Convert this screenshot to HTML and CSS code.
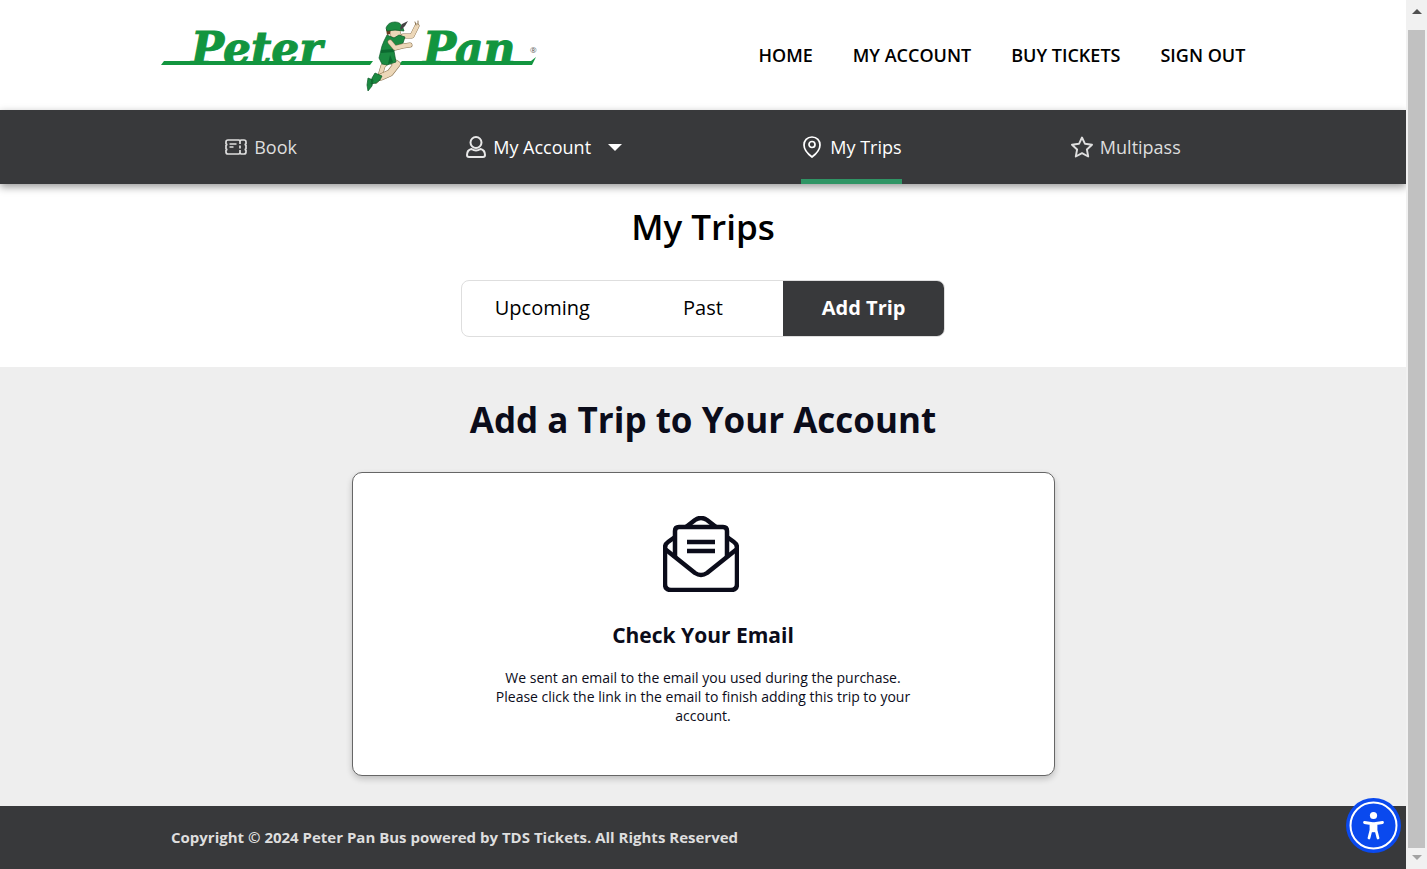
FILE: index.html
```html
<!DOCTYPE html>
<html lang="en">
<head>
    <meta charset="UTF-8">
    <meta name="viewport" content="width=device-width, initial-scale=1.0">
    <title>My Trips - Peter Pan Bus</title>
    <link rel="stylesheet" href="styles.css">
</head>
<body>

    <div class="page">
        <!-- Header -->
        <header class="header">
            <div class="header-inner">
                <a href="#" class="logo" aria-label="Peter Pan">
                    <svg width="376" height="72" viewBox="0 0 376 72">
                        <text class="logo-text" x="30" y="45">Peter</text>
                        <text class="logo-text" x="262" y="45">Pan</text>
                        <path fill="#12953f" d="M3 42h209l-3 4H0zM241 42h129l5-4-4 8H237z"/>
                        <text class="logo-mark" x="369" y="34">®</text>
                        <!-- Running figure -->
                        <g fill="none" stroke-linecap="round" stroke-linejoin="round">
                            <path stroke="#8a7350" stroke-width="5" d="M242 17l9 0 5-10M229 40l-7 7-3 10-4 5"/>
                            <path stroke="#ecd7b8" stroke-width="4" d="M242 17l9 0 5-10M229 40l-7 7-3 10-4 5"/>
                            <path stroke="#8a7350" stroke-width="7" d="M227 40l9 5-7 9-9 4"/>
                            <path stroke="#ecd7b8" stroke-width="6" d="M227 40l9 5-7 9-9 4"/>
                            <path stroke="#8a7350" stroke-width="1" d="M255 6l-1-3M257 5v-3"/>
                        </g>
                        <path fill="#ecd7b8" stroke="#8a7350" stroke-width=".6" d="M228 11h11l1 5-3 4-7-2z"/>
                        <path fill="#6b3d22" d="M225 10h5l-1 5-3 1z"/>
                        <path fill="#1b8a41" stroke="#0c5a28" stroke-width=".7" d="M225 9q2-6 9-6 6 0 8 6l1 3-9-1-8 1z"/>
                        <path fill="#1b8a41" stroke="#0c5a28" stroke-width=".7" d="M226 16l7 3 5-3 6 2-2 6-6 3-3 5 2 11-9 3-5-1-3-6 3-12 2-5z"/>
                        <path fill="#0c6a30" d="M220 31l12-1 1 3-13 1zM229 36l3 7-5 2z"/>
                        <path fill="none" stroke="#8a7350" stroke-width="5" stroke-linecap="round" stroke-linejoin="round" d="M229 23l5 6 8-2 7-1"/>
                        <path fill="none" stroke="#ecd7b8" stroke-width="4" stroke-linecap="round" stroke-linejoin="round" d="M229 23l5 6 8-2 7-1"/>
                        <path fill="#1b8a41" stroke="#0c5a28" stroke-width=".7" d="M214 54l7 3-2 4-4 3-5 1 1-6zM207 59l5 2-1 6-4 5-1-6z"/>
                        <path fill="#444" d="M239 9l2-4 6-3-3 5-4 4z"/>
                    </svg>
                </a>
                <nav class="main-nav">
                    <a href="#">HOME</a>
                    <a href="#">MY ACCOUNT</a>
                    <a href="#">BUY TICKETS</a>
                    <a href="#">SIGN OUT</a>
                </nav>
            </div>
        </header>

        <!-- Account navigation -->
        <nav class="sub-nav">
            <div class="sub-nav-inner">
                <a href="#" class="sub-link">
                    <svg width="22" height="22" viewBox="0 0 22 22" fill="none" stroke="currentColor" stroke-width="1.7">
                        <path d="M3 4h11q1 1.500 2 0h3q2 0 2 2v1.500q-1.500 1 0 2v3q-1.500 1 0 2V16q0 2-2 2h-3q-1-1.500-2 0H3q-2 0-2-2v-1.500q1.500-1 0-2v-3q1.500-1 0-2V6q0-2 2-2z"/>
                        <path d="M4.500 8h7M4.500 11h4" stroke-width="1.300"/>
                        <path d="M15 5v12" stroke-dasharray="3 1.500"/>
                    </svg>
                    <span>Book</span>
                </a>
                <button type="button" class="sub-link bright account">
                    <svg width="20" height="22" viewBox="0 0 20 22" fill="none" stroke="#e8e8e8" stroke-width="2" stroke-linejoin="round">
                        <circle cx="10" cy="6.500" r="5.500"/>
                        <path d="M5.500 13q-4.500 1-4.500 6 0 2 2 2h14q2 0 2-2 0-5-4.500-6-4.500 3-9 0z"/>
                    </svg>
                    <span>My Account</span>
                    <svg class="caret" width="14" height="8" viewBox="0 0 14 8"><path fill="currentColor" d="M0 1h14L7 8z"/></svg>
                </button>
                <a href="#" class="sub-link bright active">
                    <svg width="22" height="22" viewBox="0 0 22 22" fill="none" stroke="currentColor" stroke-width="1.700">
                        <path d="M11 1c5 0 8 3.500 8 8 0 4-4 9-8 12-4-3-8-8-8-12 0-4.500 3-8 8-8z"/>
                        <circle cx="11" cy="8.500" r="3"/>
                    </svg>
                    <span>My Trips</span>
                </a>
                <a href="#" class="sub-link">
                    <svg width="22" height="22" viewBox="0 0 22 22" fill="none" stroke="currentColor" stroke-width="1.900" stroke-linejoin="round">
                        <path d="M11 1.500l3 6.300 7 .9-5.100 4.800 1.300 7L11 17.200l-6.200 3.300 1.300-7L1 8.700l7-.9z"/>
                    </svg>
                    <span>Multipass</span>
                </a>
            </div>
        </nav>

        <section class="trips">
            <h1>My Trips</h1>
            <div class="tabs">
                <button type="button" class="tab">Upcoming</button>
                <button type="button" class="tab">Past</button>
                <button type="button" class="tab selected">Add Trip</button>
            </div>
        </section>

        <main class="content">
            <h2>Add a Trip to Your Account</h2>
            <div class="card">
                <svg class="mail-icon" width="76" height="76" viewBox="0 0 76 76" fill="none" stroke="#0b0c1a" stroke-width="4.500" stroke-linejoin="round">
                    <path d="M12 21L5 26q-3 2-3 6v36q0 6 6 6h60q6 0 6-6V32q0-4-3-6l-7-5"/>
                    <path d="M23 11l9-7q6-4 12 0l9 7"/>
                    <path d="M12 42V15q0-4 4-4h44q4 0 4 4v27"/>
                    <path d="M2 33l30 24q6 4 12 0l30-24"/>
                    <path d="M24 26h28M24 35h28"/>
                </svg>
                <h3>Check Your Email</h3>
                <p>We sent an email to the email you used during the purchase. Please click the link in the email to finish adding this trip to your account.</p>
            </div>
        </main>

        <footer class="footer">
            <p>Copyright © 2024 Peter Pan Bus powered by TDS Tickets. All Rights Reserved</p>
        </footer>

        <button type="button" class="accessibility" aria-label="Accessibility menu">
            <svg width="55" height="55" viewBox="0 0 55 55">
                <circle cx="27.500" cy="27.500" r="27.500" fill="#0a49ee"/>
                <circle cx="27.500" cy="27.500" r="23" fill="none" stroke="#fff" stroke-width="2"/>
                <circle cx="27.500" cy="17.500" r="3.600" fill="#fff"/>
                <path d="M18.500 24.500l6.500 1v6.500l-2 8M36.500 24.500l-6.500 1v6.500l2 8" fill="none" stroke="#fff" stroke-width="2.800" stroke-linecap="round" stroke-linejoin="round"/>
                <path d="M24 24.200h7v10h-7z" fill="#fff"/>
            </svg>
        </button>
    </div>

    <!-- Scroll track -->
    <div class="scroll-track">
        <svg width="10" height="5" viewBox="0 0 10 5"><path fill="#505050" d="M0 5l5-5 5 5z"/></svg>
        <div class="scroll-thumb"></div>
        <svg width="10" height="5" viewBox="0 0 10 5"><path fill="#a3a3a3" d="M0 0h10L5 5z"/></svg>
    </div>

</body>
</html>
```
FILE: styles.css
```css
* {
    box-sizing: border-box;
}

body {
    display: flex;
    min-height: 100vh;
    margin: 0;
    font-family: "Open Sans", "Noto Sans", sans-serif;
    color: #000;
    background-color: #fff;
}

h1, h2, h3, p {
    margin: 0;
}

a {
    color: inherit;
    text-decoration: none;
}

button {
    padding: 0;
    border: 0;
    background: none;
    font-family: inherit;
    color: inherit;
    cursor: pointer;
}

svg {
    display: block;
    flex-shrink: 0;
}

.page {
    display: flex;
    flex-direction: column;
    flex: 1;
    overflow: hidden;
}

/* Header */
.header-inner {
    display: flex;
    align-items: center;
    justify-content: space-between;
    width: 80%;
    height: 110px;
    margin: 0 auto;
    padding: 0 20px;
}

.logo-text {
    font-family: "DejaVu Serif", serif;
    font-size: 44px;
    font-weight: bold;
    font-style: italic;
    fill: #12953f;
    stroke: #12953f;
    stroke-width: 1px;
}

.logo-mark {
    font-size: 8px;
    fill: #555;
}

.main-nav {
    display: flex;
    gap: 40px;
    font-size: 18px;
    font-weight: 600;
}

/* Account navigation */
.sub-nav {
    position: relative;
    background-color: #38393b;
    box-shadow: 0 3px 8px rgba(0, 0, 0, 0.4);
}

.sub-nav-inner {
    display: flex;
    justify-content: space-around;
    width: 80%;
    height: 74px;
    margin: 0 auto;
}

.sub-link {
    display: flex;
    align-items: center;
    gap: 7px;
    border-top: 5px solid transparent;
    border-bottom: 5px solid transparent;
    font-size: 18px;
    color: #dedede;
}

.sub-link.bright {
    color: #fff;
}

.sub-link.active {
    border-bottom-color: #2f9565;
}

.account {
    margin-right: 10px;
}

.caret {
    margin-left: 10px;
}

/* Trips */
.trips {
    display: flex;
    flex-direction: column;
    align-items: center;
    gap: 29px;
    padding: 19px 0 30px;
}

h1 {
    font-size: 35px;
    font-weight: 600;
    line-height: 48px;
}

.tabs {
    display: grid;
    grid-template-columns: repeat(3, 1fr);
    width: 484px;
    height: 57px;
    border: 1px solid #dedede;
    border-radius: 8px;
    overflow: hidden;
}

.tab {
    padding-bottom: 2px;
    font-size: 20px;
}

.tab.selected {
    background-color: #38393b;
    font-weight: 700;
    color: #fff;
}

.content {
    display: flex;
    flex-direction: column;
    flex: 1;
    align-items: center;
    gap: 28px;
    padding: 29px 0 30px;
    background-color: #eee;
    color: #0b0c1a;
}

h2 {
    font-size: 35px;
    line-height: 48px;
}

.card {
    display: flex;
    flex-direction: column;
    align-items: center;
    width: 50%;
    padding: 43px 40px 50px;
    border: 1px solid #666;
    border-radius: 10px;
    background-color: #fff;
    box-shadow: 0 3px 6px rgba(0, 0, 0, 0.2);
}

.mail-icon {
    margin-right: 5px;
}

h3 {
    margin: 29px 0 19px;
    font-size: 21px;
    line-height: 28px;
}

.card p {
    max-width: 420px;
    font-size: 14px;
    line-height: 19px;
    text-align: center;
}

/* Footer */
.footer {
    padding: 20px 171px;
    background-color: #38393b;
    font-size: 15px;
    font-weight: 700;
    line-height: 23px;
    color: #dedede;
}

.accessibility {
    position: fixed;
    right: 26px;
    bottom: 16px;
    border-radius: 50%;
}

.scroll-track {
    display: flex;
    flex-direction: column;
    align-items: center;
    width: 21px;
    padding: 9px 0;
    background-color: #f1f1f1;
}

.scroll-thumb {
    flex: 1;
    width: 17px;
    margin: 16px 0 7px;
    background-color: #c1c1c1;
}
```
